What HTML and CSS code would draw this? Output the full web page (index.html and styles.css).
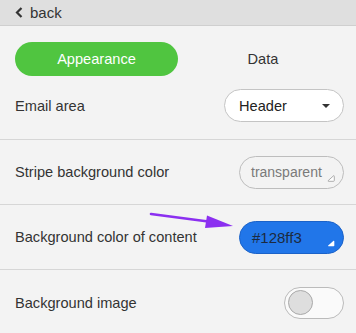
FILE: index.html
```html
<!DOCTYPE html>
<html lang="en">
<head>
    <meta charset="UTF-8">
    <meta name="viewport" content="width=device-width, initial-scale=1.0">
    <title>Settings</title>
    <link rel="stylesheet" href="styles.css">
</head>
<body>
    <div class="topbar">
        <svg class="chevron" width="8" height="11" viewBox="0 0 8 11">
            <path d="M6.5 1 L2 5.5 L6.5 10" fill="none" stroke="#333" stroke-width="2.2"/>
        </svg>
        <span>back</span>
    </div>

    <div class="panel">
        <div class="tabs">
            <div class="tab active">Appearance</div>
            <div class="tab">Data</div>
        </div>

        <div class="row first">
            <span class="label">Email area</span>
            <div class="select">
                <span>Header</span>
                <span class="caret"></span>
            </div>
        </div>

        <div class="row">
            <span class="label">Stripe background color</span>
            <div class="color-input">
                <span>transparent</span>
                <svg class="corner" width="8" height="7" viewBox="0 0 8 7">
                    <path d="M6.5 0.8 Q7.3 0.5 7.3 1.5 L7.3 5.5 Q7.3 6.3 6.5 6.3 L1.5 6.3 Q0.7 6.3 1.2 5.6 Z" fill="#fff" stroke="#999" stroke-width="0.8"/>
                </svg>
            </div>
        </div>

        <div class="row">
            <span class="label">Background color of content</span>
            <div class="color-input filled">
                <span>#128ff3</span>
                <svg class="corner" width="8" height="7" viewBox="0 0 8 7">
                    <path d="M6.5 0.8 Q7.3 0.5 7.3 1.5 L7.3 5.5 Q7.3 6.3 6.5 6.3 L1.5 6.3 Q0.7 6.3 1.2 5.6 Z" fill="#fff"/>
                </svg>
            </div>
        </div>

        <div class="row last">
            <span class="label">Background image</span>
            <div class="toggle">
                <span class="knob"></span>
            </div>
        </div>
    </div>

    <svg class="arrow" width="356" height="333" viewBox="0 0 356 333">
        <line x1="151" y1="214" x2="212" y2="222" stroke="#8b2ff0" stroke-width="2.6" stroke-linecap="round"/>
        <path d="M207 215.5 L233 226 L205 228 Z" fill="#8b2ff0"/>
    </svg>
</body>
</html>
```

FILE: styles.css
```css
body {
    margin: 0;
    font-family: "Liberation Sans", Arial, sans-serif;
    font-size: 14.6px;
    color: #333;
    background-color: #f3f3f3;
    position: relative;
    height: 333px;
    overflow: hidden;
}
.topbar {
    height: 26px;
    background-color: #dfdfdf;
    border-bottom: 1px solid #cfcfcf;
    box-sizing: border-box;
    display: flex;
    align-items: center;
    padding-left: 15px;
    gap: 7px;
    font-size: 15px;
}
.chevron {
    display: block;
}
.tabs {
    display: grid;
    grid-template-columns: 163px 1fr;
    padding: 16px 8px 0 15px;
    height: 50px;
    box-sizing: border-box;
}
.tab {
    height: 34px;
    border-radius: 17px;
    display: flex;
    align-items: center;
    justify-content: center;
    font-size: 14.6px;
}
.tab.active {
    background-color: #50c540;
    color: white;
}
.row {
    height: 65px;
    box-sizing: border-box;
    border-bottom: 1px solid #d6d6d6;
    display: flex;
    align-items: center;
    justify-content: space-between;
    padding: 0 12px 0 15px;
}
.row.first {
    height: 64px;
    padding-bottom: 4px;
}
.row.last {
    border-bottom: none;
}
.select {
    width: 120px;
    height: 33px;
    box-sizing: border-box;
    background: white;
    border: 1px solid #c4c4c4;
    border-radius: 17px;
    display: flex;
    align-items: center;
    justify-content: space-between;
    padding: 0 13px 0 14px;
    color: #222;
}
.caret {
    width: 0;
    height: 0;
    border-left: 4px solid transparent;
    border-right: 4px solid transparent;
    border-top: 4px solid #333;
}
.color-input {
    width: 105px;
    height: 33px;
    box-sizing: border-box;
    border: 1px solid #bdbdbd;
    border-radius: 17px;
    display: flex;
    align-items: center;
    padding-left: 11px;
    position: relative;
    color: #7a7a7a;
    font-size: 14px;
}
.color-input.filled {
    background-color: #2176e9;
    border-color: #1b62c8;
    color: #1c2a3f;
    padding-left: 12px;
    font-size: 15px;
}
.corner {
    position: absolute;
    right: 8px;
    bottom: 6px;
}
.toggle {
    width: 60px;
    height: 32px;
    box-sizing: border-box;
    border: 1px solid #bbb;
    border-radius: 16px;
    background-color: #fafafa;
    display: flex;
    align-items: center;
    padding-left: 3px;
}
.knob {
    width: 25px;
    height: 25px;
    box-sizing: border-box;
    border-radius: 50%;
    background-color: #dedede;
    border: 1px solid #a9a9a9;
}
.arrow {
    position: absolute;
    left: 0;
    top: 0;
    pointer-events: none;
}
```
